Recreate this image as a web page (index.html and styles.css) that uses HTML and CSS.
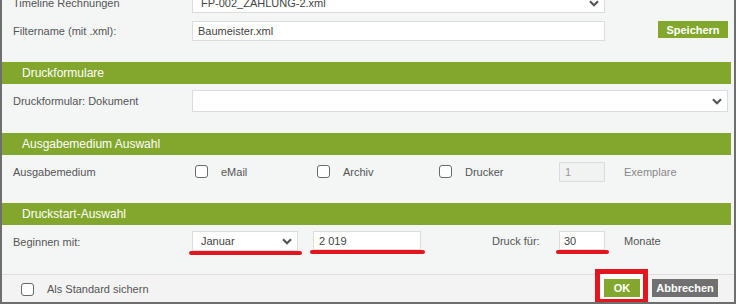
FILE: index.html
```html
<!DOCTYPE html>
<html lang="de">
<head>
  <meta charset="UTF-8" />
  <title>Druckeinstellungen</title>
  <link rel="stylesheet" href="styles.css">
</head>
<body>

  <div class="dialog">

    <div class="section top">
      <div class="row">
        <label class="label">Timeline Rechnungen</label>
        <div class="select w-mid">
          <span>FP-002_ZAHLUNG-2.xml</span>
          <svg class="chev" width="10" height="7" viewBox="0 0 10 7"><polyline points="1,1.2 5,5.2 9,1.2" /></svg>
        </div>
      </div>
      <div class="row">
        <label class="label">Filtername (mit .xml):</label>
        <div class="input w-mid">Baumeister.xml</div>
        <button class="btn btn-green save">Speichern</button>
      </div>
    </div>

    <div class="head">Druckformulare</div>
    <div class="section">
      <div class="row tall">
        <label class="label">Druckformular: Dokument</label>
        <div class="select w-full tall">
          <span></span>
          <svg class="chev" width="10" height="7" viewBox="0 0 10 7"><polyline points="1,1.2 5,5.2 9,1.2" /></svg>
        </div>
      </div>
    </div>

    <div class="head">Ausgabemedium Auswahl</div>
    <div class="section">
      <div class="row mid">
        <label class="label">Ausgabemedium</label>
        <label class="opt"><span class="box"></span>eMail</label>
        <label class="opt"><span class="box"></span>Archiv</label>
        <label class="opt opt-last"><span class="box"></span>Drucker</label>
        <div class="input small disabled">1</div>
        <span class="unit muted">Exemplare</span>
      </div>
    </div>

    <div class="head">Druckstart-Auswahl</div>
    <div class="section">
      <div class="row tall">
        <label class="label">Beginnen mit:</label>
        <div class="select month marked">
          <span>Januar</span>
          <svg class="chev" width="10" height="7" viewBox="0 0 10 7"><polyline points="1,1.2 5,5.2 9,1.2" /></svg>
        </div>
        <div class="input year marked">2 019</div>
        <span class="for">Druck für:</span>
        <div class="input small marked">30</div>
        <span class="unit">Monate</span>
      </div>
    </div>

    <div class="footer">
      <label class="check"><span class="box"></span>Als Standard sichern</label>
      <div class="actions">
        <span class="boxed"><button class="btn btn-green ok">OK</button></span>
        <button class="btn btn-gray cancel">Abbrechen</button>
      </div>
    </div>

  </div>

</body>
</html>
```

FILE: styles.css
```css
body {
  margin: 0;
  font-family: "Liberation Sans", Arial, sans-serif;
  font-size: 11px;
  color: #555;
  background: #fff;
}
.dialog {
  height: 304px;
  box-sizing: border-box;
  border: 2px solid #6e6e6e;
  border-top: 0;
  padding-right: 3px;
  background: #f4f5f5;
  overflow: hidden;
  display: flex;
  flex-direction: column;
}
.section {
  padding: 6px 0 21px;
}
.section.top {
  margin-top: -7px;
  padding-top: 0;
  display: flex;
  flex-direction: column;
  gap: 8px;
}
.row {
  display: flex;
  align-items: center;
  height: 20px;
}
.row.tall {
  height: 22px;
  align-items: flex-start;
}
.row.mid {
  height: 21px;
}
.row.tall .label {
  line-height: 20px;
}
.row.tall .label:first-child {
  align-self: center;
}
.label {
  flex: none;
  width: 190px;
  padding-left: 11px;
  box-sizing: border-box;
}
.head {
  flex: none;
  height: 22px;
  line-height: 22px;
  padding-left: 20px;
  background: #82a72c;
  color: #fff;
  font-size: 12px;
}

/* felder */
.input,
.select {
  flex: none;
  box-sizing: border-box;
  height: 20px;
  border: 1px solid #dcdcdc;
  background: #fff;
  color: #444;
  display: flex;
  align-items: center;
}
.input {
  padding-left: 5px;
}
.select {
  justify-content: space-between;
  padding: 0 5px 0 8px;
}
.select.tall {
  height: 22px;
}
.chev polyline {
  fill: none;
  stroke: #555;
  stroke-width: 2.2;
}
.w-mid {
  width: 413px;
}
.w-full {
  width: 536px;
}
.small {
  width: 46px;
  padding-left: 4px;
}
.input.disabled {
  background: #f1f2f2;
  color: #999;
  padding-left: 5px;
}
.month {
  width: 106px;
}
.year {
  width: 108px;
  height: 19px;
  margin-left: 15px;
}
.row .small {
  height: 19px;
}
.row.mid .small {
  height: 20px;
}
.for {
  width: 67px;
  margin-left: 71px;
  line-height: 20px;
}
.unit {
  margin-left: 19px;
  line-height: 20px;
}
.muted {
  color: #888;
}

/* checkboxen */
.opt {
  flex: none;
  width: 122px;
  padding-left: 3px;
  box-sizing: border-box;
  display: flex;
  align-items: center;
  gap: 13px;
}
.opt-last {
  width: 123px;
}
.box {
  flex: none;
  width: 13px;
  height: 13px;
  box-sizing: border-box;
  border: 1.3px solid #6a6a6a;
  border-radius: 3px;
  background: #fff;
}

/* buttons */
.btn {
  border: 0;
  padding: 0;
  font-family: inherit;
  font-size: 11px;
  font-weight: bold;
  color: #fff;
  cursor: pointer;
}
.btn-green {
  background: #82a72c;
}
.btn-gray {
  background: #707070;
}
.save {
  width: 70px;
  height: 17px;
  margin-left: 53px;
  align-self: flex-start;
}
.ok {
  display: block;
  width: 36px;
  height: 18px;
}
.cancel {
  width: 66px;
  height: 18px;
}

.footer {
  flex: none;
  margin-top: auto;
  height: 28px;
  box-sizing: border-box;
  border-top: 1px solid #dedede;
  background: #f3f3f3;
  display: flex;
  align-items: flex-start;
  padding: 4px 13px 0 19px;
  margin-right: -3px;
}
.check {
  display: flex;
  align-items: center;
  gap: 13px;
  height: 18px;
  padding-top: 1px;
}
.actions {
  margin-left: auto;
  display: flex;
  gap: 12px;
  margin-right: 3px;
}

/* rote markierungen */
.marked {
  position: relative;
}
.marked::after {
  content: "";
  position: absolute;
  left: -4px;
  right: -5px;
  top: calc(100% + 1px);
  height: 4px;
  border-radius: 2px;
  background: #e3161f;
}
.boxed {
  position: relative;
  z-index: 0;
}
.boxed::before {
  content: "";
  position: absolute;
  z-index: -1;
  left: -9px;
  right: -8px;
  top: -10px;
  bottom: -7px;
  border: 5px solid #e3161f;
  background: #fff;
}
```
